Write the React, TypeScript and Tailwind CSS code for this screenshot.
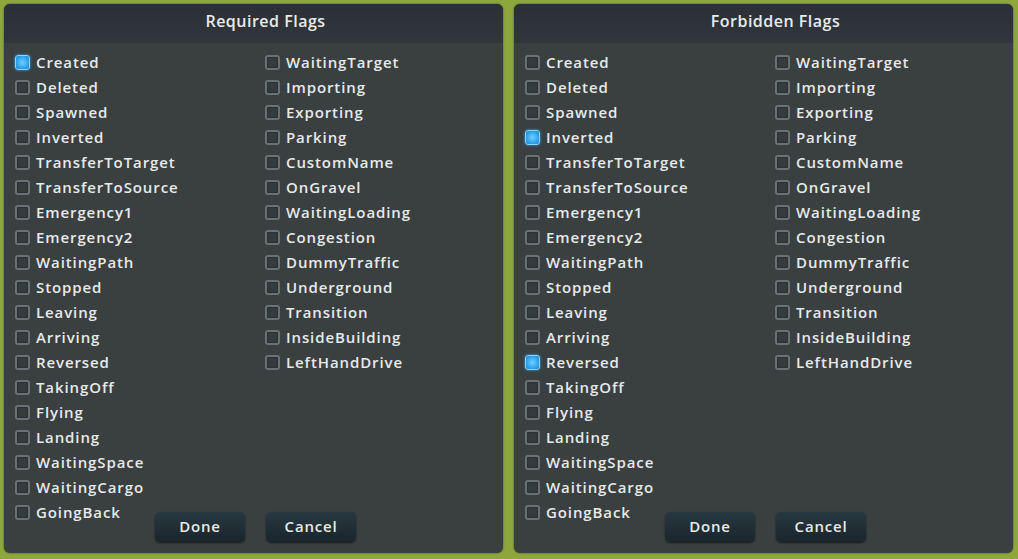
import React from "react";

const col1 = ["Created","Deleted","Spawned","Inverted","TransferToTarget","TransferToSource","Emergency1","Emergency2","WaitingPath","Stopped","Leaving","Arriving","Reversed","TakingOff","Flying","Landing","WaitingSpace","WaitingCargo","GoingBack"];
const col2 = ["WaitingTarget","Importing","Exporting","Parking","CustomName","OnGravel","WaitingLoading","Congestion","DummyTraffic","Underground","Transition","InsideBuilding","LeftHandDrive"];

function Box({ checked }: { checked: boolean }) {
  return checked ? (
    <span className="w-[15px] h-[15px] rounded-[3px] border border-[#8fd3ff] bg-[radial-gradient(circle,#6fd0ff_0%,#2a9de8_70%,#1b7fc8_100%)] shadow-[0_0_3px_#2aa8ff] shrink-0" />
  ) : (
    <span className="w-[15px] h-[15px] rounded-[3px] border-2 border-[#687275] bg-[#353c3e] shadow-[inset_0_0_2px_rgba(0,0,0,0.6)] shrink-0" />
  );
}

function Row({ label, checked }: { label: string; checked: boolean }) {
  return (
    <div className="h-[25px] flex items-center gap-[6px]">
      <Box checked={checked} />
      <span className="text-[15px] font-semibold tracking-[0.9px] text-[#e6eaea] leading-none">{label}</span>
    </div>
  );
}

function Panel({ title, checked }: { title: string; checked: string[] }) {
  return (
    <div className="w-[499px] h-[549px] rounded-[6px] bg-[#3a3f40] flex flex-col overflow-hidden shadow-[0_0_2px_rgba(0,0,0,0.6)]">
      <div className="h-[39px] shrink-0 bg-[linear-gradient(#2a3036,#30363a)] flex items-center justify-center pb-[5px] pl-[24px]">
        <span className="text-[16px] font-semibold tracking-[0.5px] text-[#e8ecec]">{title}</span>
      </div>
      <div className="flex pl-[11px] pt-[7px]">
        <div className="w-[250px] flex flex-col">
          {col1.map((l) => <Row key={l} label={l} checked={checked.includes(l)} />)}
        </div>
        <div className="flex flex-col">
          {col2.map((l) => <Row key={l} label={l} checked={checked.includes(l)} />)}
        </div>
      </div>
      <div className="flex gap-[21px] pl-[151px] -mt-[13px]">
        <button className="w-[90px] h-[30px] pb-[2px] rounded-[5px] bg-[linear-gradient(#283841,#1a252c)] shadow-[0_1px_2px_rgba(0,0,0,0.6)] text-[15px] font-semibold tracking-[0.8px] text-[#e6eaea]">Done</button>
        <button className="w-[90px] h-[30px] pb-[2px] rounded-[5px] bg-[linear-gradient(#283841,#1a252c)] shadow-[0_1px_2px_rgba(0,0,0,0.6)] text-[15px] font-semibold tracking-[0.8px] text-[#e6eaea]">Cancel</button>
      </div>
    </div>
  );
}

export default function App() {
  return (
    <div className="w-[1018px] h-[559px] bg-[#8ca83c] flex gap-[11px] pl-[4px] pt-[4px] overflow-hidden" style={{ fontFamily: '"Open Sans", sans-serif' }}>
      <Panel title="Required Flags" checked={["Created"]} />
      <Panel title="Forbidden Flags" checked={["Inverted", "Reversed"]} />
    </div>
  );
}
